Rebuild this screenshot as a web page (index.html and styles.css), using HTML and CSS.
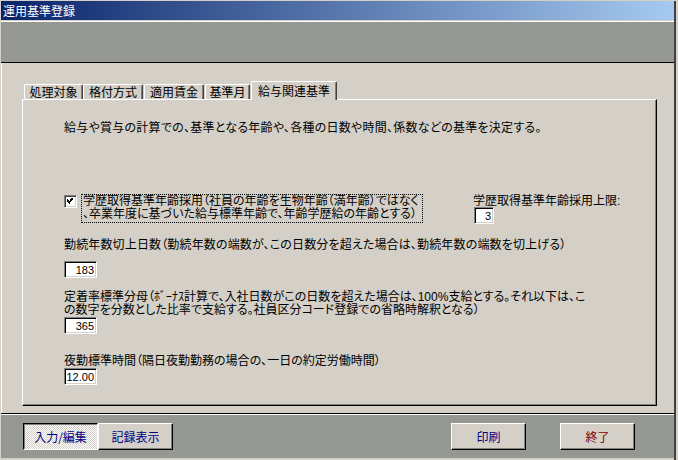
FILE: index.html
```html
<!DOCTYPE html>
<html lang="ja">
<head>
<meta charset="utf-8">
<title>運用基準登録</title>
<link rel="stylesheet" href="styles.css">
</head>
<body>
<div class="window">
  <div class="frame">
    <div class="titlebar"><span class="title">運用基準登録</span></div>
    <div class="band"></div>
    <div class="form">
      <div class="tabs">
        <div class="tab t1">処理対象</div>
        <div class="tab t2">格付方式</div>
        <div class="tab t3">適用賃金</div>
        <div class="tab t4">基準月</div>
        <div class="tab active">給与関連基準</div>
      </div>
      <div class="panel">
        <p class="desc">給与や賞与の計算での、基準となる年齢や、各種の日数や時間、係数などの基準を決定する。</p>
        <div class="check-row">
          <span class="checkbox">
            <svg width="9" height="9" viewBox="0 0 9 9" shape-rendering="crispEdges"><rect x="1" y="2" width="1" height="3"/><rect x="2" y="3" width="1" height="3"/><rect x="3" y="4" width="1" height="3"/><rect x="4" y="3" width="1" height="3"/><rect x="5" y="2" width="1" height="3"/><rect x="6" y="1" width="1" height="3"/><rect x="7" y="0" width="1" height="3"/></svg>
          </span>
          <div class="check-label">
            <div class="line">学歴取得基準年齢採用（社員の年齢を生物年齢（満年齢）ではなく</div>
            <div class="line">、卒業年度に基づいた給与標準年齢で、年齢学歴給の年齢とする）</div>
          </div>
          <div class="side-field">
            <div class="label">学歴取得基準年齢採用上限:</div>
            <input class="num w19" type="text" value="3" readonly>
          </div>
        </div>
        <div class="field f-kinzoku">
          <div class="label pad1 wide">勤続年数切上日数（勤続年数の端数が、この日数分を超えた場合は、勤続年数の端数を切上げる）</div>
          <input class="num w33 gap10" type="text" value="183" readonly>
        </div>
        <div class="field f-teichaku">
          <div class="label">
            <div class="line">定着率標準分母（ﾎﾞｰﾅｽ計算で、入社日数がこの日数を超えた場合は、100%支給とする。それ以下は、こ</div>
            <div class="line">の数字を分数とした比率で支給する。社員区分コード登録での省略時解釈となる）</div>
          </div>
          <input class="num w33" type="text" value="365" readonly>
        </div>
        <div class="field f-yakin">
          <div class="label pad1">夜勤標準時間（隔日夜勤勤務の場合の、一日の約定労働時間）</div>
          <input class="num w33 gap1" type="text" value="12.00" readonly>
        </div>
      </div>
    </div>
    <div class="footer">
      <button class="btn pressed">入力/編集</button>
      <button class="btn">記録表示</button>
      <button class="btn print">印刷</button>
      <button class="btn exit">終了</button>
    </div>
  </div>
</div>
</body>
</html>
```
FILE: styles.css
```css
* { box-sizing: border-box; }
html, body { margin: 0; padding: 0; }
body {
  width: 678px;
  height: 460px;
  overflow: hidden;
  background: #d4d0c8;
  font-family: "Noto Sans CJK JP", "Noto Sans", sans-serif;
  font-size: 12px;
  line-height: 12px;
  color: #000;
}
.window {
  width: 678px;
  height: 460px;
  padding-top: 1px;
  border-left: 1px solid #d4d0c8;
  border-right: 2px solid #d4d0c8;
  background: #d4d0c8;
}
.frame {
  height: 459px;
  display: flex;
  flex-direction: column;
  border-right: 2px solid #404040;
}
.titlebar {
  height: 19px;
  display: flex;
  align-items: center;
  padding-left: 2px;
  background: linear-gradient(to right, #0a246a, #a6caf0);
}
.title {
  color: #fff;
  font-size: 12px;
  line-height: 12px;
}
.band {
  margin-top: 1px;
  height: 42px;
  background: #959793;
  border-top: 1px solid #fff;
  border-bottom: 1px solid #000;
}
.form {
  flex: 1;
  padding: 18px 0 0 20px;
  border-left: 1px solid #fff;
}
.tabs {
  display: flex;
  align-items: flex-end;
  height: 18px;
  padding-left: 2px;
}
.tab {
  height: 15px;
  line-height: 14px;
  text-align: center;
  background: #d4d0c8;
  border-top: 1px solid #fff;
  border-left: 1px solid #fff;
  border-right: 1px solid #404040;
  border-radius: 2px 2px 0 0;
  box-shadow: inset -1px 0 #808080;
  white-space: nowrap;
}
.t1 { width: 59px; }
.t2 { width: 60px; }
.t3 { width: 60px; margin-left: 1px; }
.t4 { width: 45px; margin-left: 1px; }
.tab.active {
  width: 86px;
  height: 19px;
  margin-left: 1px;
  margin-bottom: -1px;
  line-height: 16px;
  padding-top: 1px;
  position: relative;
  z-index: 1;
}
.panel {
  width: 635px;
  height: 307px;
  padding: 0 0 0 41px;
  border-top: 1px solid #fff;
  border-left: 1px solid #fff;
  border-right: 1px solid #000;
  border-bottom: 1px solid #000;
  box-shadow: inset -1px -1px #808080;
  font-family: "Liberation Sans", "Noto Sans CJK JP", sans-serif;
  font-feature-settings: "palt";
  white-space: nowrap;
}
.desc {
  margin: 22px 0 0;
  letter-spacing: 0.25px;
}
.wide { letter-spacing: 0.15px; }
.line {
  height: 13px;
  line-height: 13px;
}
.pad1 { padding-top: 1px; }
.check-row {
  display: flex;
  align-items: flex-start;
  margin-top: 60px;
}
.checkbox {
  width: 13px;
  height: 13px;
  margin-top: 1px;
  padding: 2px;
  background: #fff;
  border-style: solid;
  border-width: 1px;
  border-color: #808080 #fff #fff #808080;
  box-shadow: inset 1px 1px #404040, inset -1px -1px #d4d0c8;
  display: flex;
}
.checkbox svg { fill: #000; margin: -1px 0 0 -1px; }
.check-label {
  margin-left: 4px;
  width: 342px;
  padding: 0 0 1px 1px;
  border: 1px dotted #000;
}
.side-field {
  margin-left: 50px;
  padding-top: 1px;
}
.num {
  display: block;
  height: 17px;
  padding: 0 2px 0 0;
  margin: 0;
  font-family: "Liberation Sans", Arial, sans-serif;
  font-size: 11px;
  line-height: 14px;
  text-align: right;
  color: #000;
  background: #fff;
  border-style: solid;
  border-width: 1px;
  border-color: #808080 #fff #fff #808080;
  box-shadow: inset 1px 1px #000, inset -1px -1px #d4d0c8;
  outline: none;
}
.w19 { width: 20px; margin-left: 1px; }
.w33 { width: 33px; }
.gap10 { margin-top: 10px; }
.gap1 { margin-top: 1px; }
.f-kinzoku { margin-top: 14px; }
.f-teichaku { margin-top: 13px; }
.f-yakin { margin-top: 20px; }
.footer {
  height: 47px;
  display: flex;
  align-items: flex-start;
  padding: 9px 39px 0 22px;
  background: #959793;
  border-top: 1px solid #000;
  box-shadow: inset 0 1px #fff;
  border-bottom: 2px solid #d4d0c8;
}
.btn {
  width: 75px;
  height: 27px;
  margin: 0;
  padding: 0;
  font-family: "Noto Sans CJK JP", sans-serif;
  font-size: 12px;
  line-height: 12px;
  color: #000080;
  background: #d4d0c8;
  border-style: solid;
  border-width: 1px;
  border-color: #fff #000 #000 #fff;
  box-shadow: inset -1px -1px #808080;
}
.btn.pressed {
  border-color: #000 #fff #fff #000;
  box-shadow: inset 1px 1px #808080;
  background: repeating-conic-gradient(#fff 0 25%, #d4d0c8 0 50%) 0 0 / 2px 2px;
}
.btn.print { margin-left: auto; }
.btn.exit { margin-left: 34px; color: #800000; }
```
